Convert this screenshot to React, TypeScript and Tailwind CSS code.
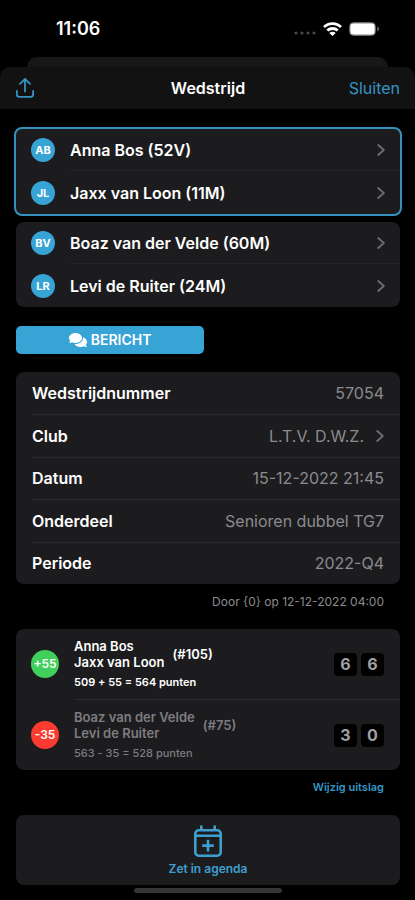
import { FaComments } from 'react-icons/fa'

interface Player {
  initials: string
  name: string
}

interface Side {
  delta: string
  names: string[]
  rank: string
  points: string
  sets: number[]
  won: boolean
}

const homePlayers: Player[] = [
  { initials: 'AB', name: 'Anna Bos (52V)' },
  { initials: 'JL', name: 'Jaxx van Loon (11M)' },
]

const awayPlayers: Player[] = [
  { initials: 'BV', name: 'Boaz van der Velde (60M)' },
  { initials: 'LR', name: 'Levi de Ruiter (24M)' },
]

const details = [
  { label: 'Wedstrijdnummer', value: '57054' },
  { label: 'Club', value: 'L.T.V. D.W.Z.', link: true },
  { label: 'Datum', value: '15-12-2022 21:45' },
  { label: 'Onderdeel', value: 'Senioren dubbel TG7' },
  { label: 'Periode', value: '2022-Q4' },
]

const sides: Side[] = [
  {
    delta: '+55',
    names: ['Anna Bos', 'Jaxx van Loon'],
    rank: '(#105)',
    points: '509 + 55 = 564 punten',
    sets: [6, 6],
    won: true,
  },
  {
    delta: '-35',
    names: ['Boaz van der Velde', 'Levi de Ruiter'],
    rank: '(#75)',
    points: '563 - 35 = 528 punten',
    sets: [3, 0],
    won: false,
  },
]

function Chevron() {
  return (
    <svg className="h-3 w-2 shrink-0 text-[#6e6e72]" viewBox="0 0 8 12" fill="none" stroke="currentColor" strokeWidth="1.8" strokeLinecap="round" strokeLinejoin="round" aria-hidden="true">
      <path d="M1.2 1L6.8 6L1.2 11" />
    </svg>
  )
}

function StatusBar() {
  return (
    <div className="flex h-[57px] items-center justify-between pl-14 pr-[35px]">
      <span className="text-lg font-semibold">11:06</span>
      <div className="flex items-center gap-[7px]">
        <svg className="h-4 w-[22px]" viewBox="0 0 22 16" fill="#48484a" aria-hidden="true">
          <circle cx="2" cy="12" r="1.6" />
          <circle cx="8" cy="12" r="1.6" />
          <circle cx="14" cy="12" r="1.6" />
          <circle cx="20" cy="12" r="1.6" />
        </svg>
        <svg className="h-[14px] w-[19px]" viewBox="0 0 19 14" fill="none" stroke="white" strokeWidth="2.8" aria-hidden="true">
          <path d="M1 5C5.6 0.4 13.4 0.4 18 5" />
          <path d="M4.3 8.6C7.2 5.8 11.8 5.8 14.7 8.6" />
          <path d="M9.5 14L6.3 10.9C8.1 9.3 10.9 9.3 12.7 10.9Z" fill="white" stroke="none" />
        </svg>
        <svg className="h-[14px] w-[31px]" viewBox="0 0 31 14" aria-hidden="true">
          <rect x="0.5" y="0.5" width="26" height="13" rx="4" fill="none" stroke="#6b6b6b" />
          <rect x="1.2" y="1.2" width="24.6" height="11.6" rx="3.2" fill="white" />
          <path d="M28.3 4.6C30.6 5.2 30.6 8.8 28.3 9.4Z" fill="#6b6b6b" />
        </svg>
      </div>
    </div>
  )
}

function PlayerList({ players }: { players: Player[] }) {
  return (
    <ul className="divide-y divide-transparent">
      {players.map((player, i) => (
        <li key={player.initials}>
          <button type="button" className="flex h-[42px] w-full items-center gap-[15px] pl-[15px] text-left">
            <span className="flex size-6 shrink-0 items-center justify-center rounded-full bg-[#38a3d5] text-[11px] font-bold">
              {player.initials}
            </span>
            <span className={`flex h-full grow items-center justify-between pr-[15px] ${i < players.length - 1 ? 'border-b border-[#262628]' : ''}`}>
              <span className="text-base font-semibold">{player.name}</span>
              <Chevron />
            </span>
          </button>
        </li>
      ))}
    </ul>
  )
}

function ScoreRow({ side, first }: { side: Side; first: boolean }) {
  return (
    <li className={`flex items-center gap-[15px] pl-[15px] ${first ? 'h-[70px]' : 'h-[71px]'}`}>
      <span className={`flex size-7 shrink-0 items-center justify-center rounded-full text-xs font-semibold ${side.won ? 'bg-[#41cf5b]' : 'bg-[#fc3b30]'}`}>
        {side.delta}
      </span>
      <div className={`flex h-full grow items-center justify-between pr-4 ${first ? '' : 'border-t border-[#2c2c2e]'}`}>
        <div className={side.won ? 'text-white' : 'text-[#7c7c80]'}>
          <div className="flex items-center gap-2 text-[13px] leading-4 font-semibold">
            <div>
              {side.names.map((name) => (
                <p key={name}>{name}</p>
              ))}
            </div>
            <span>{side.rank}</span>
          </div>
          <p className={`mt-1 text-[11px] leading-4 ${side.won ? 'font-semibold' : 'font-medium'}`}>{side.points}</p>
        </div>
        <div className="flex gap-1">
          {side.sets.map((games, i) => (
            <span key={i} className="flex size-[23px] items-center justify-center rounded-sm bg-black text-base font-bold text-[#a0a0a4]">
              {games}
            </span>
          ))}
        </div>
      </div>
    </li>
  )
}

export default function App() {
  return (
    <div className="min-h-screen bg-black font-['Inter','Liberation_Sans',sans-serif] text-white">
      <StatusBar />

      {/* Edge of the sheet underneath */}
      <div className="mx-[27px] h-[10px] rounded-t-[10px] bg-[#171717]" />

      <header className="grid h-[42px] grid-cols-3 items-center rounded-t-[10px] bg-[#121212] pl-4 pr-[15px]">
        <button type="button" aria-label="Delen" className="justify-self-start text-[#3495c4]">
          <svg className="h-5 w-[18px]" viewBox="0 0 18 20" fill="none" stroke="currentColor" strokeWidth="1.8" strokeLinecap="round" strokeLinejoin="round">
            <path d="M9 13.5V1.3" />
            <path d="M4 5.8L9 1L14 5.8" />
            <path d="M0.9 13V16.6C0.9 18 1.8 18.9 3.2 18.9H14.8C16.2 18.9 17.1 18 17.1 16.6V13" />
          </svg>
        </button>
        <h1 className="justify-self-center text-base font-semibold">Wedstrijd</h1>
        <button type="button" className="justify-self-end text-base text-[#3495c4]">Sluiten</button>
      </header>

      <main className="pl-4 pr-[15px] pt-[18px]">
        <section className="-mx-0.5 rounded-lg border-2 border-[#3590bb] bg-[#1c1c1e]">
          <PlayerList players={homePlayers} />
        </section>

        <section className="mt-[6px] rounded-lg bg-[#1c1c1e]">
          <PlayerList players={awayPlayers} />
        </section>

        <button type="button" className="mt-[19px] flex h-7 w-[49%] items-center justify-center gap-1 rounded-[5px] bg-[#38a3d5] text-sm font-semibold">
          <FaComments className="size-[18px]" />
          BERICHT
        </button>

        <dl className="mt-[18px] grid min-h-[212px] auto-rows-fr rounded-lg bg-[#1c1c1e] pl-4">
          {details.map((item, i) => (
            <div key={item.label} className={`flex items-center justify-between pr-4 text-base ${i > 0 ? 'border-t border-[#2a2a2c]' : ''}`}>
              <dt className="font-semibold">{item.label}</dt>
              <dd className="text-[#8b8b90]">
                {item.link ? (
                  <a href="#club" className="flex items-center gap-3">
                    {item.value}
                    <Chevron />
                  </a>
                ) : (
                  item.value
                )}
              </dd>
            </div>
          ))}
        </dl>
        <p className="mt-[10px] pr-4 text-right text-xs text-[#8b8b90]">Door {'{0}'} op 12-12-2022 04:00</p>

        <ul className="mt-[19px] rounded-lg bg-[#1c1c1e]">
          {sides.map((side, i) => (
            <ScoreRow key={side.rank} side={side} first={i === 0} />
          ))}
        </ul>
        <div className="mt-[9px] flex justify-end pr-4">
          <button type="button" className="text-[11px] leading-4 font-semibold text-[#3495c4]">Wijzig uitslag</button>
        </div>

        <button type="button" className="mt-5 flex h-[70px] w-full flex-col items-center gap-1 rounded-lg bg-[#1c1c1e] pt-[10px] text-xs leading-4 font-semibold text-[#3d9fd0]">
          <svg className="h-8 w-7" viewBox="0 0 28 32" fill="none" stroke="currentColor" strokeWidth="2.6" aria-hidden="true">
            <rect x="1.3" y="5.3" width="25.4" height="25.4" rx="3.4" />
            <path d="M1.3 10.8H26.7M7.3 0.5V5.5M20.7 0.5V5.5" />
            <path d="M14 14.8V26.4M8.2 20.6H19.8" />
          </svg>
          Zet in agenda
        </button>
      </main>

      <div className="mx-auto mt-[3px] h-[5px] w-[148px] rounded-full bg-[#363636]" />
    </div>
  )
}
